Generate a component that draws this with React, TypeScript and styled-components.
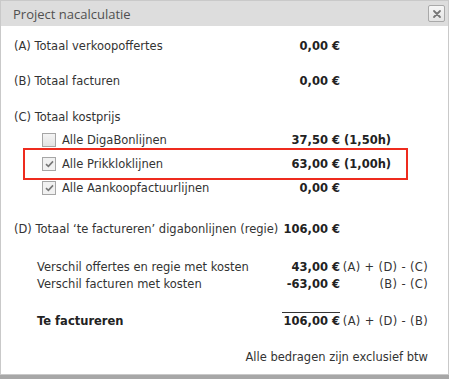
import React from 'react';
import styled, { createGlobalStyle } from 'styled-components';

const GlobalStyle = createGlobalStyle`
  html, body {
    margin: 0;
    padding: 0;
    background: #a7a7a7;
  }
  body {
    font-family: "DejaVu Sans", Tahoma, sans-serif;
    color: #333;
  }
`;

type Line = {
  label: string;
  value: string;
  extra?: string;
};

const subLines: (Line & { checked: boolean; marked?: boolean })[] = [
  { label: 'Alle DigaBonlijnen', value: '37,50 €', extra: '(1,50h)', checked: false },
  { label: 'Alle Prikkloklijnen', value: '63,00 €', extra: '(1,00h)', checked: true, marked: true },
  { label: 'Alle Aankoopfactuurlijnen', value: '0,00 €', checked: true },
];

const App: React.FC = () => {
  return (
    <>
      <GlobalStyle />
      <Dialog>
        <TitleBar>
          <Title>Project nacalculatie</Title>
          <CloseButton aria-label="Sluiten">
            <svg width="10" height="10" viewBox="0 0 10 10">
              <path d="M2 2 L8 8 M8 2 L2 8" stroke="#777" strokeWidth="1.8" strokeLinecap="round" />
            </svg>
          </CloseButton>
        </TitleBar>

        <Body>
          <Row>
            <Label>(A) Totaal verkoopoffertes</Label>
            <Value>0,00 €</Value>
          </Row>

          <Row $gap={18}>
            <Label>(B) Totaal facturen</Label>
            <Value>0,00 €</Value>
          </Row>

          <Row $gap={19}>
            <Label>(C) Totaal kostprijs</Label>
          </Row>

          <SubList>
            {subLines.map((line) => (
              <SubRow key={line.label} $marked={line.marked}>
                <SubLabel>
                  <Check $checked={line.checked}>
                    {line.checked && (
                      <svg width="9" height="8" viewBox="0 0 9 8">
                        <path d="M1 4.2 L3.4 6.4 L8 1.4" fill="none" stroke="#777" strokeWidth="1.6" />
                      </svg>
                    )}
                  </Check>
                  {line.label}
                </SubLabel>
                <Value>{line.value}</Value>
                {line.extra && <Hours>{line.extra}</Hours>}
              </SubRow>
            ))}
          </SubList>

          <Row $gap={21}>
            <Label>(D) Totaal ‘te factureren’ digabonlijnen (regie)</Label>
            <Value>106,00 €</Value>
          </Row>

          <Row $gap={21}>
            <Label $indent>Verschil offertes en regie met kosten</Label>
            <Value>43,00 €</Value>
            <Formula>(A) + (D) - (C)</Formula>
          </Row>

          <Row>
            <Label $indent>Verschil facturen met kosten</Label>
            <Value>-63,00 €</Value>
            <Formula>(B) - (C)</Formula>
          </Row>

          <Row $gap={20}>
            <Label $indent $bold>Te factureren</Label>
            <Value $overline>106,00 €</Value>
            <Formula>(A) + (D) - (B)</Formula>
          </Row>

          <Footer>Alle bedragen zijn exclusief btw</Footer>
        </Body>
      </Dialog>
    </>
  );
};

export default App;

const Dialog = styled.div`
  width: 447px;
  height: 373px;
  background: #fff;
  border: 1px solid #c9c9c9;
  box-shadow: 0 1px 3px rgba(0, 0, 0, 0.25);
  display: flex;
  flex-direction: column;
`;

const TitleBar = styled.div`
  height: 25px;
  background: #dddddd;
  display: flex;
  align-items: center;
  justify-content: space-between;
  padding: 0 3px 0 12px;
`;

const Title = styled.span`
  font-family: "Open Sans", "DejaVu Sans", sans-serif;
  font-size: 13px;
  color: #505050;
`;

const CloseButton = styled.div`
  width: 15px;
  height: 15px;
  border: 1px solid #a9a9a9;
  border-radius: 2px;
  background: linear-gradient(#f6f6f6, #e4e4e4);
  display: flex;
  align-items: center;
  justify-content: center;
`;

const Body = styled.div`
  padding: 12px 20px 0 13px;
  font-size: 11.5px;
  line-height: 17px;
`;

const Row = styled.div<{ $gap?: number }>`
  display: grid;
  grid-template-columns: 268px 58px 88px;
  margin-top: ${(p) => p.$gap ?? 0}px;
  white-space: nowrap;
`;

const Label = styled.div<{ $indent?: boolean; $bold?: boolean }>`
  padding-left: ${(p) => (p.$indent ? 23 : 0)}px;
  font-weight: ${(p) => (p.$bold ? 700 : 400)};
  color: ${(p) => (p.$bold ? '#222' : '#333')};
`;

const Value = styled.div<{ $overline?: boolean }>`
  text-align: right;
  font-weight: 700;
  color: #222;
  border-top: 1px solid ${(p) => (p.$overline ? '#333' : 'transparent')};
  margin-top: -1px;
`;

const Formula = styled.div`
  text-align: right;
  color: #333;
  letter-spacing: 0.35px;
`;

const SubList = styled.div`
  margin-top: 2px;
  display: flex;
  flex-direction: column;
`;

const SubRow = styled.div<{ $marked?: boolean }>`
  position: relative;
  display: grid;
  grid-template-columns: 268px 58px 88px;
  height: 24px;
  align-items: center;
  white-space: nowrap;

  &::before {
    content: '';
    display: ${(p) => (p.$marked ? 'block' : 'none')};
    position: absolute;
    left: 9px;
    right: 20px;
    top: -4px;
    bottom: -4px;
    border: 2px solid #ee2b1e;
  }
`;

const SubLabel = styled.div`
  display: flex;
  align-items: center;
  gap: 6px;
  padding-left: 28px;
`;

const Check = styled.span<{ $checked: boolean }>`
  width: 12px;
  height: 12px;
  border: 1px solid #a6a6a6;
  background: ${(p) => (p.$checked ? '#f1f1f1' : 'linear-gradient(#f4f4f4, #e2e2e2)')};
  display: flex;
  align-items: center;
  justify-content: center;
`;

const Hours = styled.div`
  font-weight: 700;
  color: #222;
  padding-left: 4px;
`;

const Footer = styled.div`
  margin-top: 19px;
  text-align: right;
  width: 414px;
  color: #333;
`;
